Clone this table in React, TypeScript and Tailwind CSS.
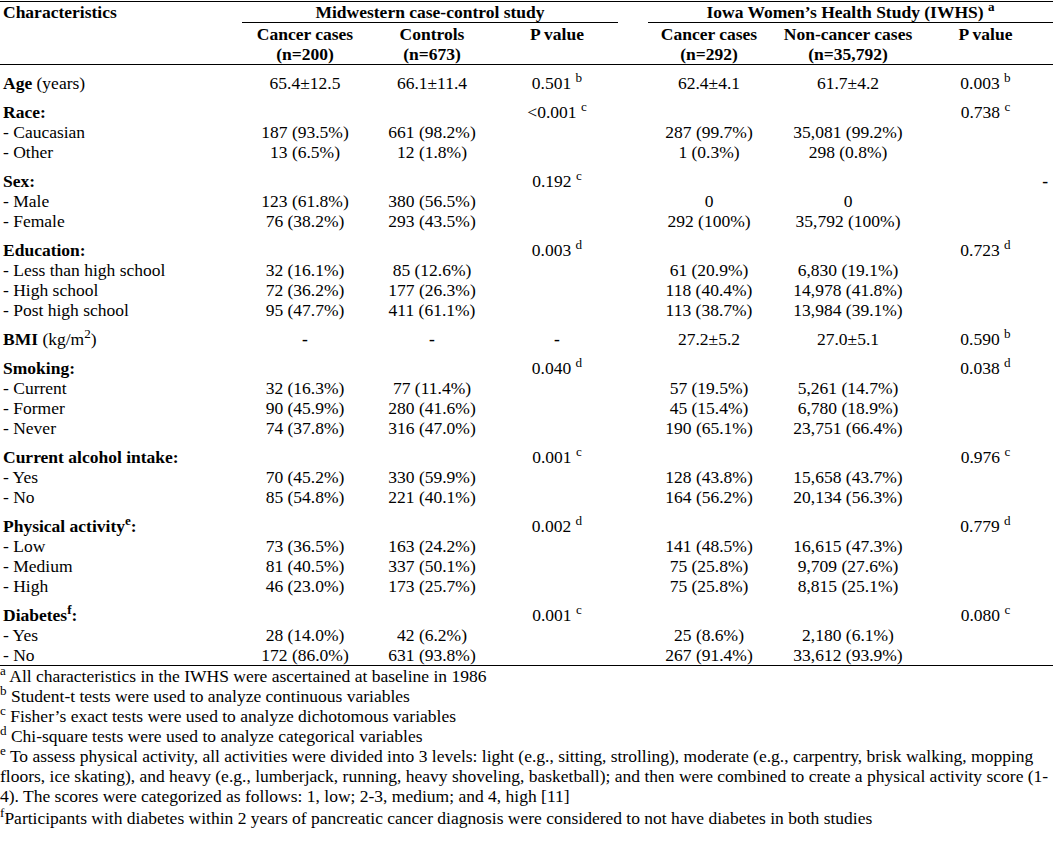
import React from "react";

type Cell = React.ReactNode;

const COLS = "grid grid-cols-[242px_126px_128px_122px_30px_122px_156px_127px]";

const S = ({ c }: { c: string }) => <sup>{c}</sup>;

function P({ v, s }: { v: string; s: string }) {
  return (
    <>
      {v} <S c={s} />
    </>
  );
}

function Row({ label, cells }: { label: Cell; cells: Cell[] }) {
  const [a, b, p1, c, d, p2] = cells;
  return (
    <div className={`${COLS} h-[20px] leading-[20px]`}>
      <div className="pl-[3px] whitespace-nowrap">{label}</div>
      <div className="text-center whitespace-nowrap">{a}</div>
      <div className="text-center whitespace-nowrap">{b}</div>
      <div className="text-center whitespace-nowrap">{p1}</div>
      <div />
      <div className="text-center whitespace-nowrap">{c}</div>
      <div className="text-center whitespace-nowrap">{d}</div>
      <div className="text-center whitespace-nowrap pr-[8px]">{p2}</div>
    </div>
  );
}

function Section({ children, first }: { children: React.ReactNode; first?: boolean }) {
  return <div className={first ? "" : "mt-[9px]"}>{children}</div>;
}

export default function App() {
  return (
    <div className="w-[1058px] h-[852px] bg-white text-black font-['Liberation_Serif','Times_New_Roman',serif] text-[17.5px] pt-[1px]">
      <div className="w-[1053px]">
        {/* Header */}
        <div className={`${COLS} border-t border-b border-black leading-[20px]`}>
          <div className="row-span-2 pl-[3px] font-bold">Characteristics</div>
          <div className="col-span-3 h-[21px] border-b border-black text-center font-bold">
            Midwestern case-control study
          </div>
          <div />
          <div className="col-span-3 h-[21px] border-b border-black text-center font-bold">
            Iowa Women’s Health Study (IWHS) <S c="a" />
          </div>
          <div className="text-center font-bold pt-[1px] pb-[0px]">
            Cancer cases
            <br />
            (n=200)
          </div>
          <div className="text-center font-bold pt-[1px]">
            Controls
            <br />
            (n=673)
          </div>
          <div className="text-center font-bold pt-[1px]">P value</div>
          <div />
          <div className="text-center font-bold pt-[1px]">
            Cancer cases
            <br />
            (n=292)
          </div>
          <div className="text-center font-bold pt-[1px]">
            Non-cancer cases
            <br />
            (n=35,792)
          </div>
          <div className="text-center font-bold pt-[1px] pr-[8px]">P value</div>
        </div>

        {/* Body */}
        <div className="pt-[8px] border-b border-black">
          <Section first>
            <Row
              label={
                <>
                  <b>Age</b> (years)
                </>
              }
              cells={["65.4±12.5", "66.1±11.4", <P v="0.501" s="b" />, "62.4±4.1", "61.7±4.2", <P v="0.003" s="b" />]}
            />
          </Section>
          <Section>
            <Row label={<b>Race:</b>} cells={["", "", <P v="<0.001" s="c" />, "", "", <P v="0.738" s="c" />]} />
            <Row label="- Caucasian" cells={["187 (93.5%)", "661 (98.2%)", "", "287 (99.7%)", "35,081 (99.2%)", ""]} />
            <Row label="- Other" cells={["13 (6.5%)", "12 (1.8%)", "", "1 (0.3%)", "298 (0.8%)", ""]} />
          </Section>
          <Section>
            <div className="relative">
              <Row label={<b>Sex:</b>} cells={["", "", <P v="0.192" s="c" />, "", "", ""]} />
              <span className="absolute top-0 right-[5px] font-bold leading-[20px]">-</span>
            </div>
            <Row label="- Male" cells={["123 (61.8%)", "380 (56.5%)", "", "0", "0", ""]} />
            <Row label="- Female" cells={["76 (38.2%)", "293 (43.5%)", "", "292 (100%)", "35,792 (100%)", ""]} />
          </Section>
          <Section>
            <Row label={<b>Education:</b>} cells={["", "", <P v="0.003" s="d" />, "", "", <P v="0.723" s="d" />]} />
            <Row label="- Less than high school" cells={["32 (16.1%)", "85 (12.6%)", "", "61 (20.9%)", "6,830 (19.1%)", ""]} />
            <Row label="- High school" cells={["72 (36.2%)", "177 (26.3%)", "", "118 (40.4%)", "14,978 (41.8%)", ""]} />
            <Row label="- Post high school" cells={["95 (47.7%)", "411 (61.1%)", "", "113 (38.7%)", "13,984 (39.1%)", ""]} />
          </Section>
          <Section>
            <Row
              label={
                <>
                  <b>BMI</b> (kg/m<S c="2" />)
                </>
              }
              cells={[<b>-</b>, <b>-</b>, <b>-</b>, "27.2±5.2", "27.0±5.1", <P v="0.590" s="b" />]}
            />
          </Section>
          <Section>
            <Row label={<b>Smoking:</b>} cells={["", "", <P v="0.040" s="d" />, "", "", <P v="0.038" s="d" />]} />
            <Row label="- Current" cells={["32 (16.3%)", "77 (11.4%)", "", "57 (19.5%)", "5,261 (14.7%)", ""]} />
            <Row label="- Former" cells={["90 (45.9%)", "280 (41.6%)", "", "45 (15.4%)", "6,780 (18.9%)", ""]} />
            <Row label="- Never" cells={["74 (37.8%)", "316 (47.0%)", "", "190 (65.1%)", "23,751 (66.4%)", ""]} />
          </Section>
          <Section>
            <Row label={<b>Current alcohol intake:</b>} cells={["", "", <P v="0.001" s="c" />, "", "", <P v="0.976" s="c" />]} />
            <Row label="- Yes" cells={["70 (45.2%)", "330 (59.9%)", "", "128 (43.8%)", "15,658 (43.7%)", ""]} />
            <Row label="- No" cells={["85 (54.8%)", "221 (40.1%)", "", "164 (56.2%)", "20,134 (56.3%)", ""]} />
          </Section>
          <Section>
            <Row
              label={
                <b>
                  Physical activity<S c="e" />:
                </b>
              }
              cells={["", "", <P v="0.002" s="d" />, "", "", <P v="0.779" s="d" />]}
            />
            <Row label="- Low" cells={["73 (36.5%)", "163 (24.2%)", "", "141 (48.5%)", "16,615 (47.3%)", ""]} />
            <Row label="- Medium" cells={["81 (40.5%)", "337 (50.1%)", "", "75 (25.8%)", "9,709 (27.6%)", ""]} />
            <Row label="- High" cells={["46 (23.0%)", "173 (25.7%)", "", "75 (25.8%)", "8,815 (25.1%)", ""]} />
          </Section>
          <Section>
            <Row
              label={
                <b>
                  Diabetes<S c="f" />:
                </b>
              }
              cells={["", "", <P v="0.001" s="c" />, "", "", <P v="0.080" s="c" />]}
            />
            <Row label="- Yes" cells={["28 (14.0%)", "42 (6.2%)", "", "25 (8.6%)", "2,180 (6.1%)", ""]} />
            <Row label="- No" cells={["172 (86.0%)", "631 (93.8%)", "", "267 (91.4%)", "33,612 (93.9%)", ""]} />
          </Section>
        </div>
      </div>

      {/* Footnotes */}
      <div className="leading-[20px] whitespace-nowrap">
        <div>
          <S c="a" /> All characteristics in the IWHS were ascertained at baseline in 1986
        </div>
        <div>
          <S c="b" /> Student-t tests were used to analyze continuous variables
        </div>
        <div>
          <S c="c" /> Fisher’s exact tests were used to analyze dichotomous variables
        </div>
        <div>
          <S c="d" /> Chi-square tests were used to analyze categorical variables
        </div>
        <div>
          <S c="e" /> To assess physical activity, all activities were divided into 3 levels: light (e.g., sitting, strolling), moderate (e.g., carpentry, brisk walking, mopping
          <br />
          floors, ice skating), and heavy (e.g., lumberjack, running, heavy shoveling, basketball); and then were combined to create a physical activity score (1-
          <br />
          4). The scores were categorized as follows: 1, low; 2-3, medium; and 4, high [11]
        </div>
        <div className="mt-[2px]">
          <S c="f" />Participants with diabetes within 2 years of pancreatic cancer diagnosis were considered to not have diabetes in both studies
        </div>
      </div>
    </div>
  );
}
